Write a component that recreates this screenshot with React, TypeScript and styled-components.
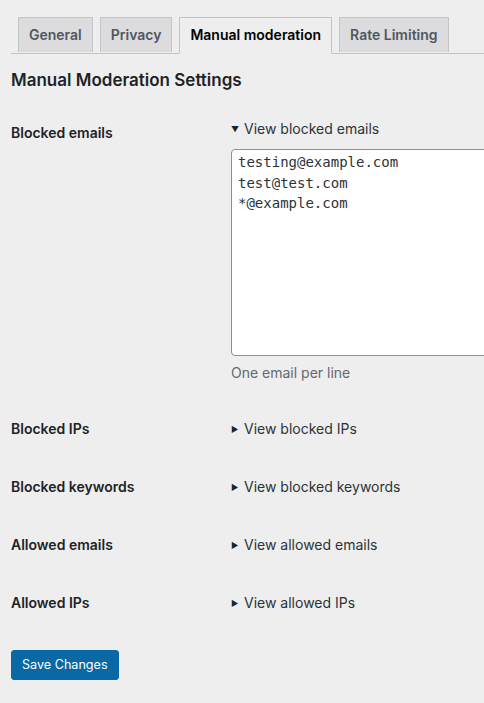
import React from "react";
import styled, { createGlobalStyle } from "styled-components";

const Global = createGlobalStyle`
  html, body { margin: 0; padding: 0; background: #eeeeee; overflow: hidden; }
  body { font-family: Inter, "Noto Sans", "Liberation Sans", sans-serif; color: #1d2327; font-size: 13px; }
`;

const Wrap = styled.div`
  padding: 17px 0 0 11px;
  width: 473px;
`;

const TabBar = styled.div`
  display: flex;
  border-bottom: 1px solid #c3c4c7;
  height: 36px;
`;

const Tab = styled.div<{ $active?: boolean }>`
  margin-left: 7px;
  padding: 5px 10px;
  font-size: 14px;
  line-height: 24px;
  font-weight: 600;
  border: 1px solid #c3c4c7;
  border-bottom: ${(p) => (p.$active ? "1px solid #eeeeee" : "none")};
  background: ${(p) => (p.$active ? "#eeeeee" : "#dcdcde")};
  color: ${(p) => (p.$active ? "#000" : "#50575e")};
  white-space: nowrap;
  height: ${(p) => (p.$active ? "25px" : "24px")};
  position: relative;
  z-index: ${(p) => (p.$active ? 1 : 0)};
  align-self: flex-start;
`;

const Heading = styled.h2`
  margin: 14px 0 12px;
  font-size: 17px;
  line-height: 24px;
  font-weight: 600;
  color: #1d2327;
`;

const Row = styled.div`
  display: grid;
  grid-template-columns: 210px 1fr;
`;

const Label = styled.div`
  padding: 20px 10px 20px 0;
  font-size: 14px;
  line-height: 18px;
  font-weight: 600;
  color: #1d2327;
`;

const Cell = styled.div<{ $open?: boolean }>`
  padding: ${(p) => (p.$open ? "15px 10px 17px" : "19px 10px 15px")};
  font-size: 14px;
`;

const Summary = styled.div`
  display: flex;
  align-items: center;
  gap: 5px;
  font-size: 14px;
  line-height: 20px;
  color: #2c3338;
  white-space: nowrap;
`;

const Marker = styled.span`
  font-size: 8px;
  line-height: 20px;
  width: 8px;
  color: #1d2327;
`;

const TextArea = styled.textarea`
  display: block;
  margin-top: 10px;
  width: 320px;
  height: 207px;
  box-sizing: border-box;
  border: 1px solid #8c8f94;
  border-radius: 4px;
  background: #fff;
  padding: 2px 6px;
  font-family: "DejaVu Sans Mono", "Liberation Mono", monospace;
  font-size: 14px;
  line-height: 20.5px;
  color: #2c3338;
  resize: none;
`;

const Description = styled.p`
  margin: 7px 0 0;
  font-size: 14px;
  line-height: 20px;
  color: #646970;
`;

const Submit = styled.div`
  padding-top: 18px;
`;

const Button = styled.button`
  height: 30px;
  padding: 0 10px;
  background: #0a68a4;
  border: 1px solid #0a68a4;
  border-radius: 3px;
  color: #fff;
  font-family: Inter, "Noto Sans", sans-serif;
  font-size: 12.6px;
  line-height: 28px;
`;

const rows = [
  ["Blocked IPs", "View blocked IPs"],
  ["Blocked keywords", "View blocked keywords"],
  ["Allowed emails", "View allowed emails"],
  ["Allowed IPs", "View allowed IPs"],
];

export default function App() {
  return (
    <>
      <Global />
      <Wrap>
        <TabBar>
          <Tab>General</Tab>
          <Tab>Privacy</Tab>
          <Tab $active>Manual moderation</Tab>
          <Tab>Rate Limiting</Tab>
        </TabBar>
        <Heading>Manual Moderation Settings</Heading>
        <Row>
          <Label>Blocked emails</Label>
          <Cell $open>
            <Summary>
              <Marker>▼</Marker>View blocked emails
            </Summary>
            <TextArea
              readOnly
              defaultValue={"testing@example.com\ntest@test.com\n*@example.com"}
            />
            <Description>One email per line</Description>
          </Cell>
        </Row>
        {rows.map(([l, s]) => (
          <Row key={l}>
            <Label>{l}</Label>
            <Cell>
              <Summary>
                <Marker>▶</Marker>
                {s}
              </Summary>
            </Cell>
          </Row>
        ))}
        <Submit>
          <Button>Save Changes</Button>
        </Submit>
      </Wrap>
    </>
  );
}
